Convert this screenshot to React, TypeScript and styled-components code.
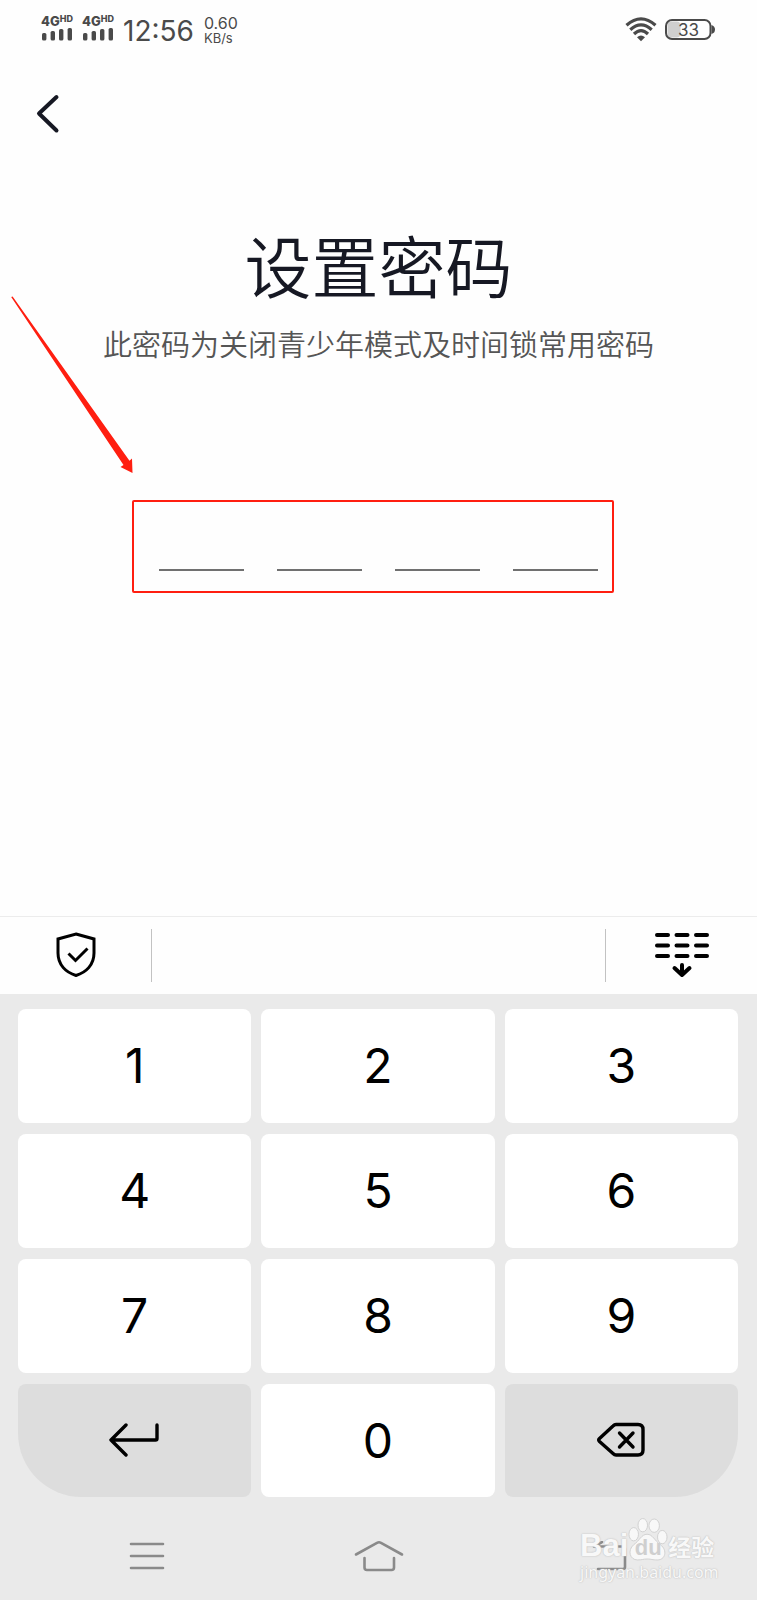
import React from "react";
import styled, { createGlobalStyle } from "styled-components";

const Global = createGlobalStyle`
  * { box-sizing: border-box; }
  body { margin: 0; background: #fefefe; }
  button, input { font: inherit; color: inherit; border: 0; padding: 0; margin: 0; background: none; border-radius: 0; }
  svg { display: block; }
`;

const Screen = styled.div`
  position: relative;
  display: flex;
  flex-direction: column;
  min-height: 100vh;
  background: #fefefe;
  color: #161823;
  font-family: Inter, "Noto Sans CJK SC", sans-serif;
`;

const StatusBar = styled.header`
  display: flex;
  justify-content: space-between;
  padding: 14px 41px 0 41px;
  height: 60px;
  color: #4a4a4a;
`;

const StatusGroup = styled.div<{ $gap: number }>`
  display: flex;
  align-items: flex-start;
  gap: ${(p) => p.$gap}px;
`;

const Signal = styled.div`
  width: 31px;
`;

const Network = styled.div`
  display: flex;
  align-items: flex-start;
  font-size: 13px;
  line-height: 14px;
  font-weight: 800;
  white-space: nowrap;
`;

const NetworkTag = styled.span`
  font-size: 9px;
  line-height: 10px;
`;

const Clock = styled.time`
  font-size: 28px;
  line-height: 34px;
`;

const Speed = styled.div`
  font-size: 16px;
  line-height: 18px;
`;

const SpeedUnit = styled.div`
  font-size: 13px;
  line-height: 13px;
`;

const Battery = styled.div`
  position: relative;
  width: 51px;
  height: 30px;
`;

const BatteryLevel = styled.span`
  position: absolute;
  inset: 0 4px 0 0;
  font-size: 17px;
  line-height: 32px;
  font-weight: 400;
  text-align: center;
`;

const BackButton = styled.button`
  align-self: flex-start;
  margin: 34px 0 0 35px;
  cursor: pointer;
`;

const Content = styled.main`
  flex: 1;
  display: flex;
  flex-direction: column;
  align-items: center;
  padding: 95px 24px 40px;
`;

const Title = styled.h1`
  margin: 0;
  font-size: 67px;
  line-height: 80px;
  font-weight: 350;
`;

const Subtitle = styled.p`
  margin: 17px 0 0;
  font-size: 29px;
  line-height: 40px;
  font-weight: 350;
  text-align: center;
  color: #555;
`;

const PinRow = styled.div`
  position: relative;
  display: flex;
  gap: 33px;
  margin-top: 155px;
`;

const PinInput = styled.input`
  width: 85px;
  height: 50px;
  border-bottom: 2px solid #707070;
  text-align: center;
  font-size: 28px;
  outline: none;
`;

const Highlight = styled.div`
  position: absolute;
  inset: -21px -16px -22px -27px;
  border: 2px solid #ff1e10;
  border-radius: 2px;
  pointer-events: none;
`;

const Arrow = styled.svg`
  position: absolute;
  left: 10px;
  top: 295px;
  pointer-events: none;
`;

const Keyboard = styled.section`
  background: #eaeaea;
`;

const Toolbar = styled.div`
  display: grid;
  grid-template-columns: 151px 1fr 151px;
  align-items: center;
  height: 78px;
  padding-bottom: 1px;
  border-top: 1px solid #ececec;
  background: #fefefe;
`;

const ToolButton = styled.button`
  display: flex;
  justify-content: center;
  align-items: center;
  height: 44px;
  cursor: pointer;
`;

const Suggestions = styled.div`
  height: 53px;
  border: solid #c2c2c2;
  border-width: 0 1px;
`;

const Keys = styled.div`
  display: grid;
  grid-template-columns: repeat(3, 1fr);
  grid-template-rows: repeat(3, 114px) 113px;
  gap: 11px 10px;
  padding: 15px 19px 0 18px;
`;

const Key = styled.button<{ $muted?: boolean; $round?: "left" | "right" }>`
  display: flex;
  justify-content: center;
  align-items: center;
  border-radius: 8px;
  border-bottom-left-radius: ${(p) => (p.$round === "left" ? 64 : 8)}px;
  border-bottom-right-radius: ${(p) => (p.$round === "right" ? 64 : 8)}px;
  background: ${(p) => (p.$muted ? "#dddddd" : "#ffffff")};
  color: #000;
  font-size: 48px;
  line-height: 56px;
  font-weight: 400;
  cursor: pointer;
`;

const NavBar = styled.nav`
  display: grid;
  grid-template-columns: 1fr 164px 1fr;
  align-items: center;
  height: 103px;
  padding-top: 14px;
`;

const NavButton = styled.button`
  display: flex;
  justify-content: center;
  cursor: pointer;
`;

const Watermark = styled.div`
  position: absolute;
  right: 41px;
  bottom: 17px;
  width: 136px;
  color: #f8f8f8;
  text-shadow: 0 0 1px #c4c4c4, 0 0 2px #c4c4c4;
  pointer-events: none;
`;

const Brand = styled.div`
  display: flex;
  align-items: flex-end;
  font: 700 31px/30px "Liberation Sans", sans-serif;
`;

const BrandChinese = styled.span`
  font: 700 23px/30px "Noto Sans CJK SC", sans-serif;
`;

const Paw = styled.div`
  position: relative;
`;

const PawText = styled.span`
  position: absolute;
  left: 0;
  right: 0;
  bottom: 0;
  text-align: center;
  font-size: 22px;
  line-height: 26px;
  color: #cfcfcf;
  text-shadow: none;
`;

const Site = styled.div`
  font: 400 16px/22px "Noto Sans", sans-serif;
  white-space: nowrap;
`;

function SignalMeter() {
  return (
    <Signal>
      <Network>
        4G<NetworkTag>HD</NetworkTag>
      </Network>
      <svg width="31" height="14" viewBox="0 0 31 14" fill="#4a4a4a" aria-hidden="true">
        <rect x="1" y="5" width="4.4" height="7.5" rx="1.6" />
        <rect x="9.6" y="3" width="4.4" height="9.5" rx="1.6" />
        <rect x="18" y="1" width="4.4" height="11.5" rx="1.6" />
        <rect x="26.6" y="0" width="4.4" height="12.5" rx="1.6" />
      </svg>
    </Signal>
  );
}

const digits = ["1", "2", "3", "4", "5", "6", "7", "8", "9"];

export default function App() {
  return (
    <>
      <Global />
      <Screen>
        <StatusBar>
          <StatusGroup $gap={10}>
            <SignalMeter />
            <SignalMeter />
            <Clock>12:56</Clock>
            <div>
              <Speed>0.60</Speed>
              <SpeedUnit>KB/s</SpeedUnit>
            </div>
          </StatusGroup>
          <StatusGroup $gap={8}>
            <svg width="32" height="28" viewBox="0 0 32 28" fill="none" stroke="#4a4a4a" strokeWidth="3.2" aria-label="Wi-Fi">
              <path d="M1.5 11.2 Q16 -1.6 30.5 11.2" />
              <path d="M5.3 15.8 Q16 6 26.7 15.8" />
              <path d="M9 20 Q16 13.2 23 20" />
              <path d="M12 23.3 Q16 19.6 20 23.3 L16 27.2 Z" fill="#4a4a4a" stroke="none" />
            </svg>
            <Battery>
              <svg width="51" height="30" viewBox="0 0 51 30" aria-hidden="true">
                <rect x="2.5" y="7.5" width="13" height="16" rx="4" fill="#cfcfcf" />
                <rect x="1" y="6" width="44.5" height="19" rx="6" fill="none" stroke="#4a4a4a" strokeWidth="2" />
                <path d="M46.5 11 Q50 12 50 15.5 Q50 19 46.5 20 Z" fill="#4a4a4a" />
              </svg>
              <BatteryLevel>33</BatteryLevel>
            </Battery>
          </StatusGroup>
        </StatusBar>

        <BackButton aria-label="返回">
          <svg width="26" height="40" viewBox="0 0 26 40" fill="none" stroke="#161823" strokeWidth="4" strokeLinecap="round" strokeLinejoin="round">
            <path d="M21.5 3 L4 19.5 L21.5 36.5" />
          </svg>
        </BackButton>

        <Content>
          <Title>设置密码</Title>
          <Subtitle>此密码为关闭青少年模式及时间锁常用密码</Subtitle>
          <PinRow>
            {[1, 2, 3, 4].map((n) => (
              <PinInput key={n} type="password" inputMode="numeric" maxLength={1} aria-label={`密码第${n}位`} />
            ))}
            <Highlight />
          </PinRow>
        </Content>

        <Arrow width="126" height="182" viewBox="0 0 126 182" fill="#ff1e10" aria-hidden="true">
          <path d="M1.2 2 L2.6 1.6 L119.5 165.7 L122 163.5 L122.5 178 L110.5 172 L113.5 170 Z" />
        </Arrow>

        <Keyboard>
          <Toolbar>
            <ToolButton aria-label="安全键盘">
              <svg width="42" height="46" viewBox="0 0 42 46" fill="none" stroke="#000" strokeWidth="3">
                <path d="M21 2 L39 7 V21 C39 33 31 40.5 21 43.5 C11 40.5 3 33 3 21 V7 Z" />
                <path d="M13.5 21.5 L20.5 28.5 L32.5 16.5" />
              </svg>
            </ToolButton>
            <Suggestions />
            <ToolButton aria-label="收起键盘">
              <svg width="54" height="46" viewBox="0 0 54 46" fill="none" stroke="#000" strokeWidth="4" strokeLinecap="round" strokeLinejoin="round">
                <path d="M2 3 H13 M21.5 3 H32.5 M41 3 H52 M2 13.5 H13 M21.5 13.5 H32.5 M41 13.5 H52 M2 24 H13 M21.5 24 H32.5 M41 24 H52" />
                <path d="M27 33 V43 M19.5 36 L27 43 L34.5 36" />
              </svg>
            </ToolButton>
          </Toolbar>
          <Keys>
            {digits.map((d) => (
              <Key key={d}>{d}</Key>
            ))}
            <Key $muted $round="left" aria-label="换行">
              <svg width="52" height="38" viewBox="0 0 52 38" fill="none" stroke="#000" strokeWidth="3.4" strokeLinecap="round" strokeLinejoin="round">
                <path d="M17 3 L2 18 L17 33 M2 18 H46.5 Q48 18 48 16.5 V3" />
              </svg>
            </Key>
            <Key>0</Key>
            <Key $muted $round="right" aria-label="删除">
              <svg width="50" height="38" viewBox="0 0 50 38" fill="none" stroke="#000" strokeWidth="3.4" strokeLinecap="round" strokeLinejoin="round">
                <path d="M20 2.5 H42 Q47 2.5 47 7.5 V28 Q47 33 42 33 H20 Q18.5 33 17 31.5 L3.5 19.5 Q2 18 3.5 16.5 L17 4 Q18.5 2.5 20 2.5 Z" />
                <path d="M23.5 11 L37 25 M37 11 L23.5 25" />
              </svg>
            </Key>
          </Keys>
          <NavBar>
            <NavButton aria-label="菜单">
              <svg width="38" height="28" viewBox="0 0 38 28" stroke="#8a8a8a" strokeWidth="2.6" strokeLinecap="round">
                <path d="M2 2 H34 M2 14 H34 M2 26 H34" />
              </svg>
            </NavButton>
            <NavButton aria-label="主页">
              <svg width="50" height="32" viewBox="0 0 50 32" fill="none" stroke="#8a8a8a" strokeWidth="2.6" strokeLinecap="round" strokeLinejoin="round">
                <path d="M2 14.5 L23 2.8 Q25 1.8 27 2.8 L48 14.5 M10.5 18 V27.5 Q10.5 30 13 30 H37.5 Q40 30 40 27.5 V18" />
              </svg>
            </NavButton>
            <NavButton aria-label="返回上一页">
              <svg width="38" height="30" viewBox="0 0 38 30" fill="none" stroke="#8a8a8a" strokeWidth="2.6" strokeLinecap="round" strokeLinejoin="round">
                <path d="M12 1 L4 5.5 H33 Q35 5.5 35 8 V26 Q35 28 33 28 H8" />
              </svg>
            </NavButton>
          </NavBar>
        </Keyboard>

        <Watermark>
          <Brand>
            <span>Bai</span>
            <Paw>
              <svg width="40" height="44" viewBox="0 0 42 46" fill="#f8f8f8" stroke="#d0d0d0" aria-hidden="true">
                <ellipse cx="6" cy="18" rx="5" ry="7" />
                <ellipse cx="15.5" cy="8.5" rx="5" ry="7" />
                <ellipse cx="27.5" cy="9" rx="5.5" ry="7" />
                <ellipse cx="36" cy="21" rx="5" ry="7" />
                <path d="M20 18 C26 18 28 25 34 29 C42 35 39 45 31 45 C25 45 25 44 20 44 C16 44 15 45 10 45 C2 45 -1 35 6 29 C12 25 14 18 20 18 Z" />
              </svg>
              <PawText>du</PawText>
            </Paw>
            <BrandChinese>经验</BrandChinese>
          </Brand>
          <Site>jingyan.baidu.com</Site>
        </Watermark>
      </Screen>
    </>
  );
}
